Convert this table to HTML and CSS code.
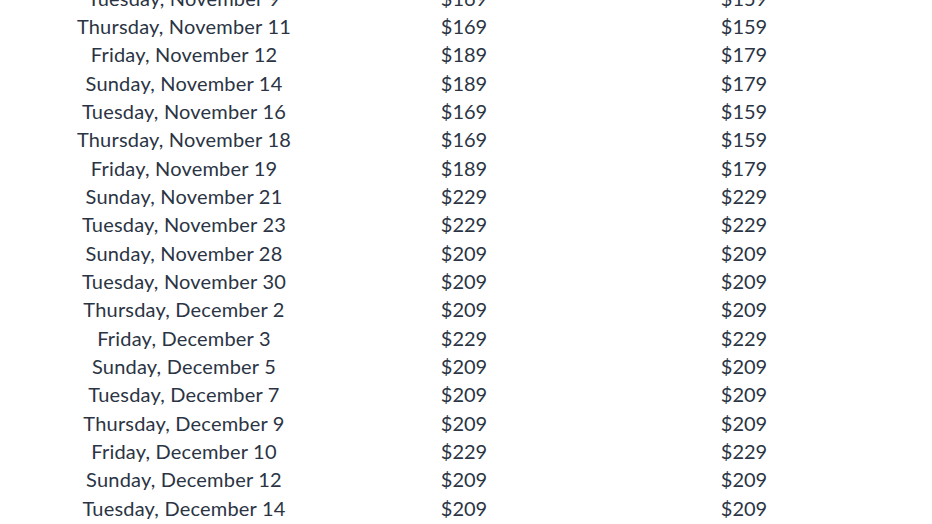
FILE: index.html
```html
<!DOCTYPE html>
<html lang="en">
<head>
<meta charset="utf-8">
<title>Prices</title>
<link rel="stylesheet" href="styles.css">
</head>
<body>
<div class="table">
  <div class="row"><span class="date">Tuesday, November 9</span><span class="price">$169</span><span class="price">$159</span></div>
  <div class="row"><span class="date">Thursday, November 11</span><span class="price">$169</span><span class="price">$159</span></div>
  <div class="row"><span class="date">Friday, November 12</span><span class="price">$189</span><span class="price">$179</span></div>
  <div class="row"><span class="date">Sunday, November 14</span><span class="price">$189</span><span class="price">$179</span></div>
  <div class="row"><span class="date">Tuesday, November 16</span><span class="price">$169</span><span class="price">$159</span></div>
  <div class="row"><span class="date">Thursday, November 18</span><span class="price">$169</span><span class="price">$159</span></div>
  <div class="row"><span class="date">Friday, November 19</span><span class="price">$189</span><span class="price">$179</span></div>
  <div class="row"><span class="date">Sunday, November 21</span><span class="price">$229</span><span class="price">$229</span></div>
  <div class="row"><span class="date">Tuesday, November 23</span><span class="price">$229</span><span class="price">$229</span></div>
  <div class="row"><span class="date">Sunday, November 28</span><span class="price">$209</span><span class="price">$209</span></div>
  <div class="row"><span class="date">Tuesday, November 30</span><span class="price">$209</span><span class="price">$209</span></div>
  <div class="row"><span class="date">Thursday, December 2</span><span class="price">$209</span><span class="price">$209</span></div>
  <div class="row"><span class="date">Friday, December 3</span><span class="price">$229</span><span class="price">$229</span></div>
  <div class="row"><span class="date">Sunday, December 5</span><span class="price">$209</span><span class="price">$209</span></div>
  <div class="row"><span class="date">Tuesday, December 7</span><span class="price">$209</span><span class="price">$209</span></div>
  <div class="row"><span class="date">Thursday, December 9</span><span class="price">$209</span><span class="price">$209</span></div>
  <div class="row"><span class="date">Friday, December 10</span><span class="price">$229</span><span class="price">$229</span></div>
  <div class="row"><span class="date">Sunday, December 12</span><span class="price">$209</span><span class="price">$209</span></div>
  <div class="row"><span class="date">Tuesday, December 14</span><span class="price">$209</span><span class="price">$209</span></div>
</div>
</body>
</html>
```
FILE: styles.css
```css
html, body {
  margin: 0;
  padding: 0;
  background: #ffffff;
  overflow: hidden;
}
body {
  font-family: "Lato", "Noto Sans", sans-serif;
  font-weight: 400;
  color: #2b3444;
  font-size: 20px;
}
.table {
  width: 840px;
  margin: -16.5px 0 0 44px;
}
.row {
  display: grid;
  grid-template-columns: 280px 280px 280px;
  height: 28.35px;
  line-height: 28.35px;
}
.date, .price {
  text-align: center;
  white-space: nowrap;
}
.date {
  letter-spacing: 0.2px;
}
```
